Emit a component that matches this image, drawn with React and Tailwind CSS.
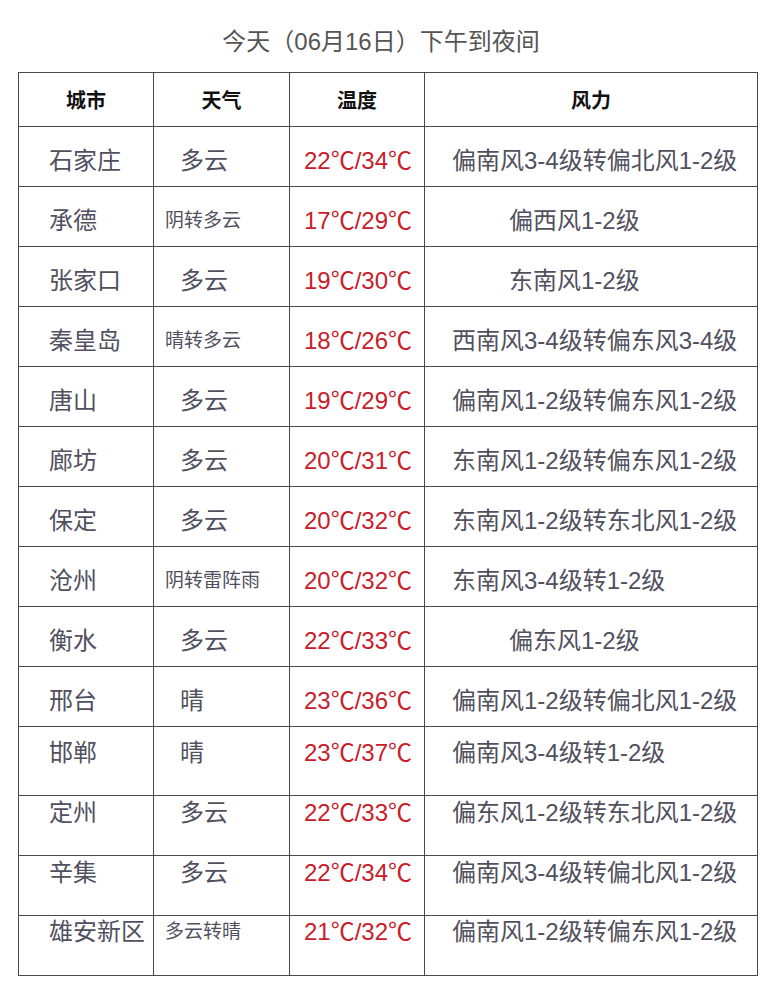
import React from "react";

const rows = [
  { city: "石家庄", weather: "多云", small: false, temp: "22℃/34℃", wind: "偏南风3-4级转偏北风1-2级", short: false },
  { city: "承德", weather: "阴转多云", small: true, temp: "17℃/29℃", wind: "偏西风1-2级", short: true },
  { city: "张家口", weather: "多云", small: false, temp: "19℃/30℃", wind: "东南风1-2级", short: true },
  { city: "秦皇岛", weather: "晴转多云", small: true, temp: "18℃/26℃", wind: "西南风3-4级转偏东风3-4级", short: false },
  { city: "唐山", weather: "多云", small: false, temp: "19℃/29℃", wind: "偏南风1-2级转偏东风1-2级", short: false },
  { city: "廊坊", weather: "多云", small: false, temp: "20℃/31℃", wind: "东南风1-2级转偏东风1-2级", short: false },
  { city: "保定", weather: "多云", small: false, temp: "20℃/32℃", wind: "东南风1-2级转东北风1-2级", short: false },
  { city: "沧州", weather: "阴转雷阵雨", small: true, temp: "20℃/32℃", wind: "东南风3-4级转1-2级", short: false },
  { city: "衡水", weather: "多云", small: false, temp: "22℃/33℃", wind: "偏东风1-2级", short: true },
  { city: "邢台", weather: "晴", small: false, temp: "23℃/36℃", wind: "偏南风1-2级转偏北风1-2级", short: false },
  { city: "邯郸", weather: "晴", small: false, temp: "23℃/37℃", wind: "偏南风3-4级转1-2级", short: false, top: "h-[69px] align-top pt-[10px]" },
  { city: "定州", weather: "多云", small: false, temp: "22℃/33℃", wind: "偏东风1-2级转东北风1-2级", short: false, top: "h-[60px] align-top pt-[1px]" },
  { city: "辛集", weather: "多云", small: false, temp: "22℃/34℃", wind: "偏南风3-4级转偏北风1-2级", short: false, top: "h-[60px] align-top pt-[1px]" },
  { city: "雄安新区", weather: "多云转晴", small: true, temp: "21℃/32℃", wind: "偏南风1-2级转偏东风1-2级", short: false, top: "h-[60px] align-top pt-0" },
];

const font = { fontFamily: '"Liberation Sans", "Noto Sans CJK SC", sans-serif' };

export default function App() {
  return (
    <div className="w-[773px] h-[1000px] bg-white" style={font}>
      <div className="h-[72px] pt-[26px] pr-[11px] text-center text-[24px] leading-[32px] text-[#555555]">
        今天（06月16日）下午到夜间
      </div>
      <table className="ml-[18px] w-[739px] table-fixed border-collapse border border-[#6e6e6e]">
        <colgroup>
          <col className="w-[135px]" />
          <col className="w-[136px]" />
          <col className="w-[135px]" />
          <col className="w-[333px]" />
        </colgroup>
        <thead>
          <tr className="h-[54px] text-[20px] font-bold text-[#111111]">
            <th className="border border-[#4a4a4a] align-middle text-center" style={{ fontFamily: '"Noto Sans CJK SC", sans-serif' }}>城市</th>
            <th className="border border-[#4a4a4a] align-middle text-center" style={{ fontFamily: '"Noto Sans CJK SC", sans-serif' }}>天气</th>
            <th className="border border-[#4a4a4a] align-middle text-center" style={{ fontFamily: '"Noto Sans CJK SC", sans-serif' }}>温度</th>
            <th className="border border-[#4a4a4a] align-middle text-center" style={{ fontFamily: '"Noto Sans CJK SC", sans-serif' }}>风力</th>
          </tr>
        </thead>
        <tbody>
          {rows.map((r) => {
            const cell = r.top ? r.top : "h-[60px] align-middle pt-[9px]";
            return (
              <tr key={r.city} className="text-[24px] leading-[32px] text-[#51505e]">
                <td className={`border border-[#4a4a4a] pl-[30px] whitespace-nowrap ${cell}`}>{r.city}</td>
                <td
                  className={`border border-[#4a4a4a] whitespace-nowrap ${cell} ${
                    r.small ? "pl-[11px] text-[19px]" : r.weather === "晴" ? "pl-[26px]" : "pl-[26px]"
                  }`}
                >
                  {r.weather}
                </td>
                <td className={`border border-[#4a4a4a] pl-[14px] whitespace-nowrap text-[#c8202b] ${cell}`}>{r.temp}</td>
                <td className={`border border-[#4a4a4a] whitespace-nowrap ${cell} ${r.short ? "pl-[84px]" : "pl-[27px]"}`}>
                  {r.wind}
                </td>
              </tr>
            );
          })}
        </tbody>
      </table>
    </div>
  );
}
